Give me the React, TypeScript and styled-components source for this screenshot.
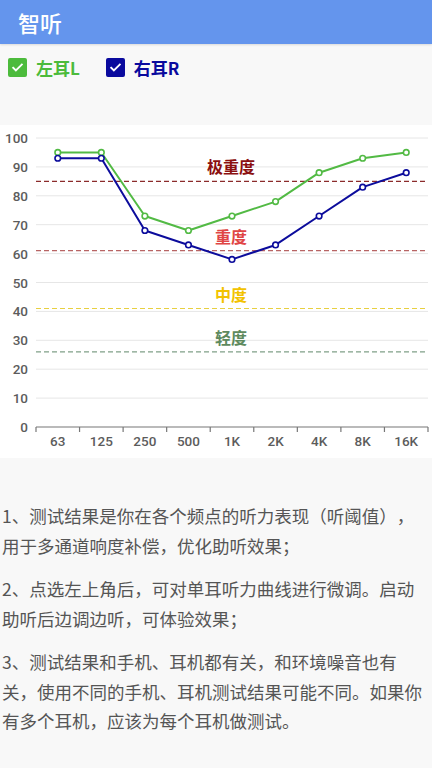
import React, { useState } from 'react';
import styled, { createGlobalStyle } from 'styled-components';

const GlobalStyle = createGlobalStyle`
  html, body {
    margin: 0;
    padding: 0;
    background: #f8f8f8;
    font-family: Roboto, "Noto Sans CJK SC", sans-serif;
  }
`;

const Page = styled.div`
  width: 432px;
  min-height: 768px;
  background: #f8f8f8;
  display: flex;
  flex-direction: column;
`;

const TopBar = styled.header`
  height: 44px;
  background: #6495ed;
  display: flex;
  align-items: center;
  padding-left: 18px;
  box-shadow: 0 1px 2px rgba(0, 0, 0, 0.12);
`;

const Title = styled.h1`
  margin: 0;
  color: #fff;
  font-size: 22px;
  font-weight: 500;
  font-family: "Noto Sans CJK SC", sans-serif;
`;

const CheckRow = styled.div`
  height: 81px;
  box-sizing: border-box;
  padding: 12px 0 0 8px;
  display: flex;
  align-items: flex-start;
  gap: 26px;
`;

const CheckItem = styled.label<{ $color: string }>`
  display: flex;
  align-items: center;
  gap: 9px;
  height: 22px;
  color: ${p => p.$color};
  font-family: "Noto Sans CJK SC", sans-serif;
  font-size: 17px;
  font-weight: 700;
  cursor: pointer;
`;

const Box = styled.span<{ $color: string; $checked: boolean }>`
  width: 19px;
  height: 19px;
  border-radius: 2px;
  box-sizing: border-box;
  background: ${p => (p.$checked ? p.$color : 'transparent')};
  border: 2px solid ${p => p.$color};
  display: flex;
  align-items: center;
  justify-content: center;
`;

const ChartPanel = styled.div`
  height: 333px;
  background: #fff;
`;

const Notes = styled.div`
  margin-top: 43px;
  padding: 0 2px;
  display: flex;
  flex-direction: column;
  gap: 14px;
`;

const Note = styled.p`
  margin: 0;
  color: #555;
  font-family: "Noto Sans CJK SC", sans-serif;
  font-size: 17.5px;
  line-height: 29.5px;
  text-spacing-trim: space-all;
`;

const freqs = ['63', '125', '250', '500', '1K', '2K', '4K', '8K', '16K'];
const left = [95, 95, 73, 68, 73, 78, 88, 93, 95];
const right = [93, 93, 68, 63, 58, 63, 73, 83, 88];

const X0 = 36;
const X1 = 428;
const STEP = (X1 - X0) / 9;
const BASE = 302; // y of 0 inside panel
const UNIT = 2.89;

const yOf = (v: number) => BASE - v * UNIT;
const xOf = (i: number) => X0 + STEP * (i + 0.5);

const levels = [
  { v: 85, line: '#8b2b2b', text: '#8b1010', label: '极重度' },
  { v: 61, line: '#b86464', text: '#e04545', label: '重度' },
  { v: 41, line: '#e8d040', text: '#f2c200', label: '中度' },
  { v: 26, line: '#80a088', text: '#5e8a5e', label: '轻度' },
];

const cjk = '"Noto Sans CJK SC", Roboto, sans-serif';
const num = 'Roboto, "Noto Sans", sans-serif';

function Check() {
  return (
    <svg width="13" height="13" viewBox="0 0 24 24">
      <path d="M4 12.5l5 5L20 6.5" fill="none" stroke="#fff" strokeWidth="3.4" strokeLinecap="square" />
    </svg>
  );
}

function Series({ data, color }: { data: number[]; color: string }) {
  const pts = data.map((v, i) => `${xOf(i)},${yOf(v)}`).join(' ');
  return (
    <g>
      <polyline points={pts} fill="none" stroke={color} strokeWidth={2} strokeLinejoin="round" />
      {data.map((v, i) => (
        <circle key={i} cx={xOf(i)} cy={yOf(v)} r={2.8} fill="#fff" stroke={color} strokeWidth={1.6} />
      ))}
    </g>
  );
}

function Chart({ showL, showR }: { showL: boolean; showR: boolean }) {
  const ticks = [0, 10, 20, 30, 40, 50, 60, 70, 80, 90, 100];
  return (
    <svg width="432" height="333" viewBox="0 0 432 333">
      {ticks.map(t => (
        <g key={t}>
          {t > 0 && <line x1={X0} x2={X1} y1={yOf(t)} y2={yOf(t)} stroke="#e6e6e6" strokeWidth={1} />}
          <text x={28} y={yOf(t) + 5} textAnchor="end" fontSize={13.5} fontWeight={500} fill="#5c5c5c" fontFamily={num}>
            {t}
          </text>
        </g>
      ))}
      {levels.map(l => (
        <g key={l.v}>
          <line x1={X0} x2={X1} y1={yOf(l.v)} y2={yOf(l.v)} stroke={l.line} strokeWidth={1.2} strokeDasharray="5 3" />
          <text x={231} y={yOf(l.v) - 8} textAnchor="middle" fontSize={16} fontWeight={700} fill={l.text} fontFamily={cjk}>
            {l.label}
          </text>
        </g>
      ))}
      <line x1={X0} x2={X1} y1={BASE} y2={BASE} stroke="#777" strokeWidth={1.2} />
      {Array.from({ length: 10 }).map((_, i) => (
        <line key={i} x1={X0 + STEP * i} x2={X0 + STEP * i} y1={BASE} y2={BASE + 5} stroke="#777" strokeWidth={1.2} />
      ))}
      {freqs.map((f, i) => (
        <text key={f} x={xOf(i)} y={BASE + 19} textAnchor="middle" fontSize={13.5} fontWeight={500} fill="#5c5c5c" fontFamily={num}>
          {f}
        </text>
      ))}
      {showL && <Series data={left} color="#52ba44" />}
      {showR && <Series data={right} color="#0c0c9c" />}
    </svg>
  );
}

export default function App() {
  const [showL, setShowL] = useState(true);
  const [showR, setShowR] = useState(true);

  return (
    <Page>
      <GlobalStyle />
      <TopBar>
        <Title>智听</Title>
      </TopBar>
      <CheckRow>
        <CheckItem $color="#4cbb3c" onClick={() => setShowL(v => !v)}>
          <Box $color="#4cbb3c" $checked={showL}>{showL && <Check />}</Box>
          左耳L
        </CheckItem>
        <CheckItem $color="#0a0a9e" onClick={() => setShowR(v => !v)}>
          <Box $color="#0a0a9e" $checked={showR}>{showR && <Check />}</Box>
          右耳R
        </CheckItem>
      </CheckRow>
      <ChartPanel>
        <Chart showL={showL} showR={showR} />
      </ChartPanel>
      <Notes>
        <Note>1、测试结果是你在各个频点的听力表现（听阈值），用于多通道响度补偿，优化助听效果；</Note>
        <Note>2、点选左上角后，可对单耳听力曲线进行微调。启动助听后边调边听，可体验效果；</Note>
        <Note>3、测试结果和手机、耳机都有关，和环境噪音也有关，使用不同的手机、耳机测试结果可能不同。如果你有多个耳机，应该为每个耳机做测试。</Note>
      </Notes>
    </Page>
  );
}
